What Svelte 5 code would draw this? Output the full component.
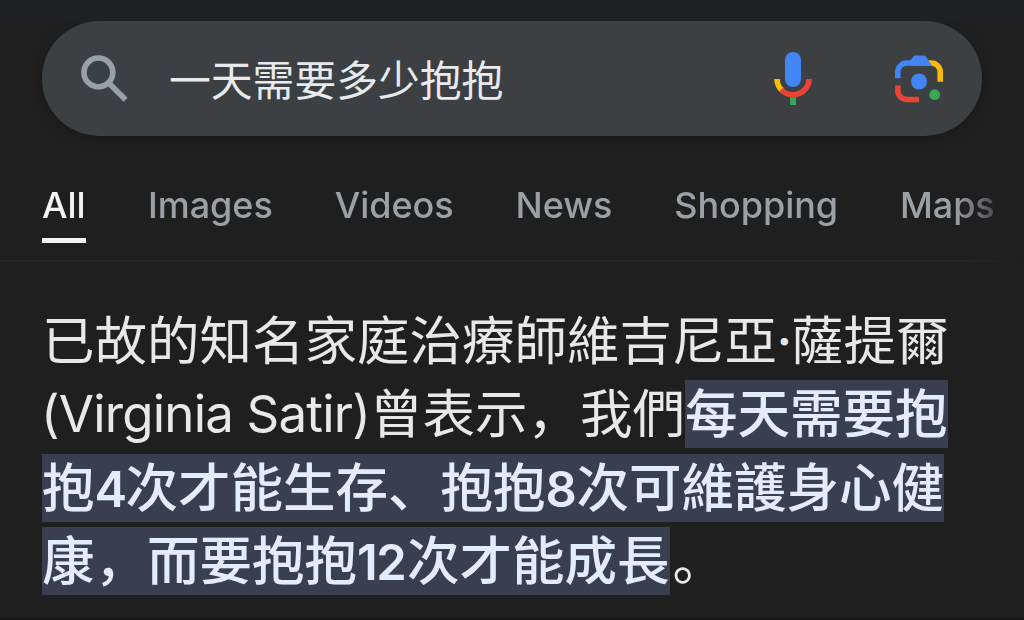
<script lang="ts">
	const query = '一天需要多少抱抱';

	const tabs = [
		{ label: 'All', active: true },
		{ label: 'Images' },
		{ label: 'Videos' },
		{ label: 'News' },
		{ label: 'Shopping' },
		{ label: 'Maps' }
	];

	type Run = { text: string; kind?: 'latin' | 'dot' | 'digit' | 'pair' | 'stop' };
	type Segment = { mark?: boolean; runs: Run[] };

	// One entry per line of the snippet
	const lines: Segment[][] = [
		[{ runs: [{ text: '已故的知名家庭治療師維吉尼亞' }, { text: '·', kind: 'dot' }, { text: '薩提爾' }] }],
		[
			{ runs: [{ text: '(Virginia Satir)', kind: 'latin' }, { text: '曾表示，我們' }] },
			{ mark: true, runs: [{ text: '每天需要抱' }] }
		],
		[
			{
				mark: true,
				runs: [
					{ text: '抱' },
					{ text: '4', kind: 'digit' },
					{ text: '次才能生存、抱抱' },
					{ text: '8', kind: 'digit' },
					{ text: '次可維護身心健' }
				]
			}
		],
		[
			{ mark: true, runs: [{ text: '康，而要抱抱' }, { text: '12', kind: 'pair' }, { text: '次才能成長' }] },
			{ runs: [{ text: '。', kind: 'stop' }] }
		]
	];
</script>

<div class="page">
	<header class="top">
		<div class="search-bar">
			<svg class="search-icon" viewBox="0 0 48 48" aria-hidden="true">
				<circle cx="17.4" cy="17.4" r="14.4" />
				<path d="M28.5 28.8 44.6 44.8" />
			</svg>
			<span class="query">{query}</span>
			<svg class="mic-icon" viewBox="0 0 38 54" aria-hidden="true">
				<rect x="11" y="0" width="16" height="35" rx="8" fill="#4285f4" />
				<path d="M16 44h6v9h-6z" fill="#34a853" />
				<path d="M3 27a16 16 0 0 0 4.8 11.2" stroke="#fbbc04" />
				<path d="M7.2 37.6A16 15.5 0 0 0 35 27" stroke="#ea4335" />
			</svg>
			<svg class="lens-icon" viewBox="0 0 48 48" aria-hidden="true">
				<path d="M33 8h3.2a9 9 0 0 1 9 9v9.8" stroke="#fbbc04" />
				<path d="M2.8 23.3V17a9 9 0 0 1 9-9H33" stroke="#4285f4" />
				<path d="M14.5 6.5 19.2.5H29q1 0 1.6.8l6.7 9.5H14.5z" fill="#4285f4" />
				<path d="M2.8 30.5v5a9 9 0 0 0 9 9H24" stroke="#ea4335" />
				<circle cx="24" cy="26.5" r="8" fill="#4285f4" />
				<circle cx="39.7" cy="39.7" r="5.4" fill="#34a853" />
			</svg>
		</div>
	</header>

	<nav class="tabs">
		{#each tabs as tab}
			<span class="tab" class:active={tab.active}>{tab.label}</span>
		{/each}
	</nav>

	<main class="snippet">
		{#each lines as line}
			<div class="line">
				{#each line as segment}
					<span class="segment" class:mark={segment.mark}>
						{#each segment.runs as run}<span class={['run', run.kind]}>{run.text}</span>{/each}
					</span>
				{/each}
			</div>
		{/each}
	</main>
</div>

<style>
	:global(body) {
		margin: 0;
		background: #1f1f1f;
	}

	.page {
		width: 1024px;
		height: 620px;
		box-sizing: border-box;
		overflow: hidden;
		background: #1f1f1f;
		border-bottom: 2px solid #181617;
		font-family: Inter, 'Noto Sans CJK SC', sans-serif;
	}

	.top {
		height: 136px;
		padding: 21px 42px 0;
		box-sizing: border-box;
		background: linear-gradient(#202125 23px, #1f1f1f 23px);
	}

	.search-bar {
		display: flex;
		align-items: center;
		height: 115px;
		padding: 0 39px;
		box-sizing: border-box;
		border-radius: 58px;
		background: #3c4043;
		box-shadow: 0 2px 10px rgba(0, 0, 0, 0.25);
	}

	svg {
		flex: none;
		fill: none;
	}

	.search-icon {
		width: 48px;
		height: 48px;
		stroke: #9aa0a6;
		stroke-width: 5.6;
	}

	.query {
		flex: 1;
		margin-left: 40px;
		padding-bottom: 2px;
		font-family: 'Noto Sans CJK SC', sans-serif;
		font-size: 41.8px;
		line-height: 60px;
		color: #e8eaed;
	}

	.mic-icon {
		width: 38px;
		height: 54px;
		stroke-width: 5.6;
	}

	.lens-icon {
		width: 48px;
		height: 48px;
		margin-left: 83px;
		stroke-width: 5.6;
	}

	.tabs {
		display: flex;
		gap: 62px;
		height: 126px;
		padding: 46px 0 0 42px;
		box-sizing: border-box;
		border-bottom: 2px solid #22272a;
		mask-image: linear-gradient(90deg, #000 955px, transparent 1018px);
	}

	.tab {
		height: 61px;
		box-sizing: border-box;
		font-size: 36px;
		font-weight: 500;
		line-height: 47px;
		letter-spacing: -0.06px;
		color: #9aa0a6;
	}

	.tab.active {
		width: 44px;
		border-bottom: 5px solid #f1f3f4;
		color: #f1f3f4;
	}

	.snippet {
		display: flex;
		flex-direction: column;
		gap: 5.5px;
		padding: 44.5px 0 0 42px;
	}

	.line,
	.segment {
		display: flex;
		height: 68px;
	}

	.run {
		font-family: 'Noto Sans CJK SC', sans-serif;
		font-size: 52.5px;
		line-height: 61px;
		color: #e8e8e8;
		white-space: pre;
	}

	.mark {
		background: #3a3f50;
	}

	.mark .run {
		color: #e2ecff;
		font-weight: 500;
	}

	.run.latin,
	.run.digit,
	.run.pair {
		font-family: Inter, sans-serif;
		font-size: 51px;
		line-height: 68px;
	}

	.run.latin {
		width: 329px;
		margin-left: -1px;
		letter-spacing: -0.8px;
	}

	.run.digit,
	.run.pair {
		font-size: 49px;
		line-height: 71px;
		letter-spacing: -2px;
	}

	.mark .run.digit,
	.mark .run.pair {
		font-weight: 600;
	}

	.run.digit {
		width: 31px;
	}

	.run.pair {
		width: 50px;
		letter-spacing: -1.5px;
	}

	.run.dot {
		width: 14px;
		font-family: Inter, sans-serif;
		font-size: 44px;
		font-weight: 700;
		line-height: 68px;
		text-align: center;
	}

	.run.stop {
		padding-left: 3px;
	}
</style>
